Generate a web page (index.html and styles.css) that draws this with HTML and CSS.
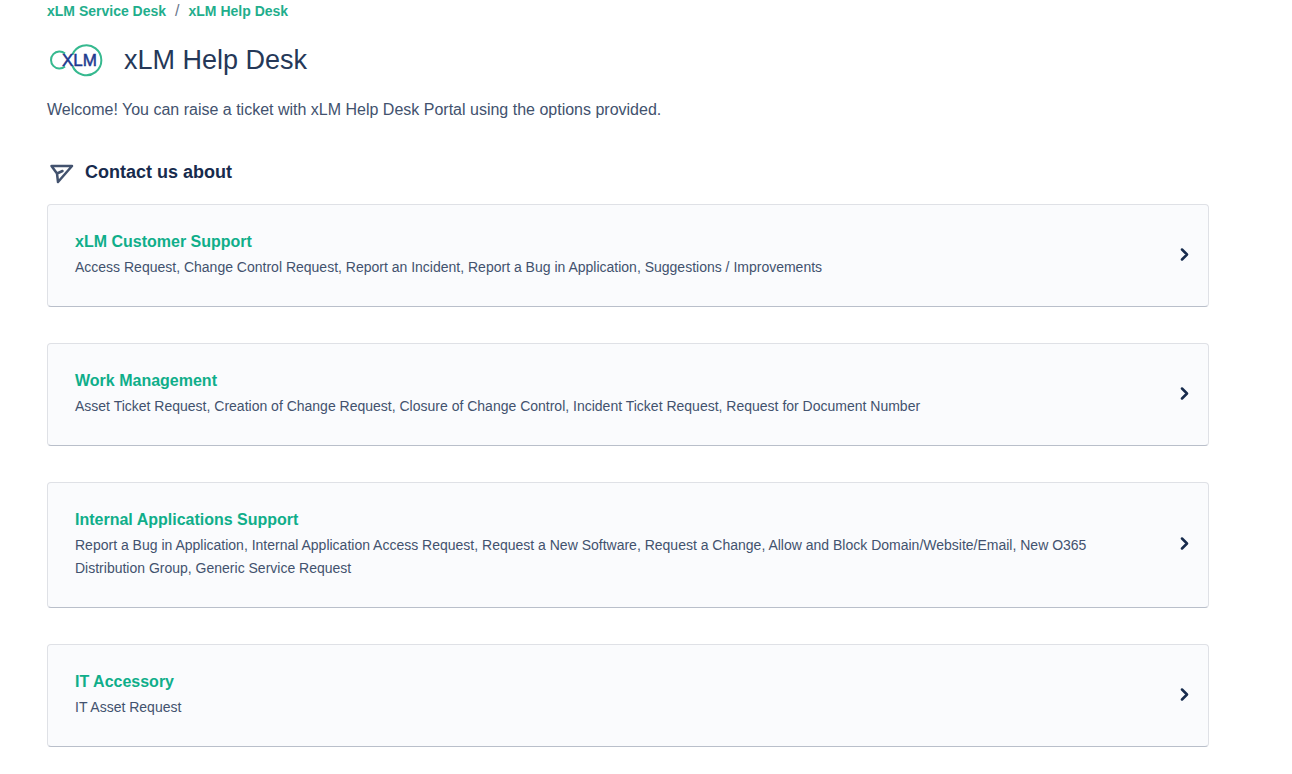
FILE: index.html
```
<!DOCTYPE html>
<html lang="en">
  <head>
    <meta charset="UTF-8" />
    <meta name="viewport" content="width=device-width, initial-scale=1.0" />
    <title>xLM Help Desk</title>
    <link rel="stylesheet" href="styles.css">
  </head>
  <body>
    <div class="page">
      <nav class="breadcrumbs" aria-label="Breadcrumbs">
        <a href="#">xLM Service Desk</a>
        <span class="separator">/</span>
        <a href="#">xLM Help Desk</a>
      </nav>

      <header class="portal-header">
        <svg class="logo" viewBox="0 0 60 36" role="img" aria-label="xLM logo">
          <g fill="none" stroke="#36b98f" stroke-width="2">
            <path d="M18 11.500A8.500 8.500 0 1 0 18 24.500" />
            <path d="M25.500 12.500A15 15 0 1 1 25.500 24" />
          </g>
          <text x="15" y="24" class="logo-text">XLM</text>
        </svg>
        <h1>xLM Help Desk</h1>
      </header>

      <p class="intro">Welcome! You can raise a ticket with xLM Help Desk Portal using the options provided.</p>

      <main>
        <div class="section-title">
          <svg class="send-icon" viewBox="0 0 28 24" aria-hidden="true">
            <path d="M4.500 6h20.500L11 22 10 13.500zM10 13.500L15.500 11" />
          </svg>
          <h2>Contact us about</h2>
        </div>

        <div class="groups">
          <a class="card" href="#">
            <div class="card-text">
              <h3>xLM Customer Support</h3>
              <p>Access Request, Change Control Request, Report an Incident, Report a Bug in Application, Suggestions / Improvements</p>
            </div>
            <svg class="chevron" viewBox="0 0 10 14" aria-hidden="true"><path d="M2 1.500l5 5-5 5" /></svg>
          </a>
          <a class="card" href="#">
            <div class="card-text">
              <h3>Work Management</h3>
              <p>Asset Ticket Request, Creation of Change Request, Closure of Change Control, Incident Ticket Request, Request for Document Number</p>
            </div>
            <svg class="chevron" viewBox="0 0 10 14" aria-hidden="true"><path d="M2 1.500l5 5-5 5" /></svg>
          </a>
          <a class="card" href="#">
            <div class="card-text">
              <h3>Internal Applications Support</h3>
              <p>Report a Bug in Application, Internal Application Access Request, Request a New Software, Request a Change, Allow and Block Domain/Website/Email, New O365 Distribution Group, Generic Service Request</p>
            </div>
            <svg class="chevron" viewBox="0 0 10 14" aria-hidden="true"><path d="M2 1.500l5 5-5 5" /></svg>
          </a>
          <a class="card" href="#">
            <div class="card-text">
              <h3>IT Accessory</h3>
              <p>IT Asset Request</p>
            </div>
            <svg class="chevron" viewBox="0 0 10 14" aria-hidden="true"><path d="M2 1.500l5 5-5 5" /></svg>
          </a>
        </div>
      </main>
    </div>
  </body>
</html>
```

FILE: styles.css
```
* {
  box-sizing: border-box;
}
body {
  margin: 0;
  background: #fff;
  color: #253858;
  font-family: "Liberation Sans", Arial, sans-serif;
}
h1,
h2,
h3,
p {
  margin: 0;
}
.page {
  padding: 0 83px 24px 47px;
}
.breadcrumbs {
  display: flex;
  gap: 9px;
  font-size: 14px;
  line-height: 22px;
}
.breadcrumbs a {
  color: #1fae8c;
  font-weight: bold;
  text-decoration: none;
}
.separator {
  color: #6b778c;
  font-size: 16px;
}
.portal-header {
  display: flex;
  align-items: center;
  gap: 17px;
  margin-top: 20px;
}
.logo {
  width: 60px;
  height: 36px;
}
.logo-text {
  fill: #1d3a8f;
  stroke: #1d3a8f;
  stroke-width: 0.5px;
  font-size: 17px;
}
h1 {
  font-size: 27px;
  font-weight: normal;
  line-height: 36px;
}
.intro {
  margin-top: 20px;
  color: #42526e;
  font-size: 16px;
  line-height: 24px;
}
.section-title {
  display: flex;
  align-items: center;
  gap: 10px;
  margin-top: 38px;
}
.send-icon {
  width: 28px;
  height: 24px;
  fill: none;
  stroke: #42526e;
  stroke-width: 2.5;
  stroke-linejoin: round;
  stroke-linecap: round;
}
h2 {
  color: #172b4d;
  font-size: 18px;
  line-height: 24px;
}
.groups {
  display: flex;
  flex-direction: column;
  gap: 36px;
  margin-top: 20px;
}
.card {
  display: flex;
  align-items: center;
  justify-content: space-between;
  gap: 80px;
  padding: 25px 18px 27px 27px;
  border: 1px solid #dfe1e6;
  border-bottom-color: #b9bfca;
  border-radius: 4px;
  background: #fafbfd;
  color: #42526e;
  text-decoration: none;
}
h3 {
  color: #0fae8a;
  font-size: 16px;
  line-height: 24px;
}
.card p {
  margin-top: 2px;
  font-size: 14px;
  line-height: 23px;
}
.chevron {
  flex: none;
  width: 10px;
  height: 14px;
  fill: none;
  stroke: #172b4d;
  stroke-width: 2.5;
  stroke-linecap: round;
  stroke-linejoin: round;
}
```
